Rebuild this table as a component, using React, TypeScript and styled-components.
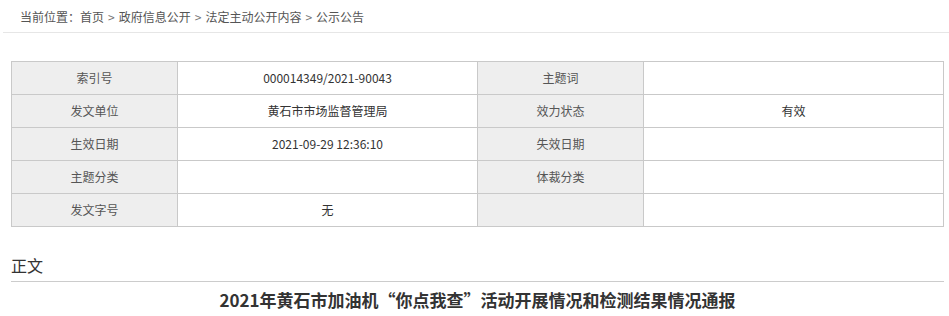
import styled, { createGlobalStyle } from "styled-components";

const GlobalStyle = createGlobalStyle`
  body {
    margin: 0;
    background: #fff;
    font-family: "Noto Sans CJK SC", "Noto Sans", "Liberation Sans", sans-serif;
    color: #333;
  }
`;

const Page = styled.div`
  width: 949px;
  overflow: hidden;
`;

const Crumbs = styled.div`
  margin-left: 3px;
  height: 33px;
  padding-left: 17px;
  border-bottom: 1px solid #e6e6e6;
  display: flex;
  align-items: center;
  font-size: 12px;
  color: #555;
  box-sizing: border-box;
`;

const Sep = styled.span`
  margin: 0 4px;
  color: #777;
`;

const Content = styled.div`
  padding: 28px 5px 0 11px;
`;

const InfoTable = styled.table`
  width: 933px;
  border-collapse: collapse;
  table-layout: fixed;
  font-size: 12px;
`;

const Cell = styled.td<{ $label?: boolean }>`
  height: 32px;
  padding: 0;
  border: 1px solid #c9c9c9;
  text-align: center;
  background: ${(p) => (p.$label ? "#eeeeee" : "#fff")};
  color: ${(p) => (p.$label ? "#555" : "#333")};
  line-height: 1;
`;

const SectionHead = styled.div`
  margin-top: 28px;
  padding-bottom: 6px;
  border-bottom: 1px solid #cccccc;
  font-size: 16px;
  color: #333;
  line-height: 20px;
`;

const Title = styled.h1`
  margin: 6px 0 0;
  text-align: center;
  font-size: 17px;
  font-weight: 700;
  color: #333;
  line-height: 24px;
`;

const rows: [string, string, string, string][] = [
  ["索引号", "000014349/2021-90043", "主题词", ""],
  ["发文单位", "黄石市市场监督管理局", "效力状态", "有效"],
  ["生效日期", "2021-09-29 12:36:10", "失效日期", ""],
  ["主题分类", "", "体裁分类", ""],
  ["发文字号", "无", "", ""],
];

const crumbs = ["首页", "政府信息公开", "法定主动公开内容", "公示公告"];

export default function App() {
  return (
    <Page>
      <GlobalStyle />
      <Crumbs>
        当前位置：
        {crumbs.map((c, i) => (
          <span key={c}>
            {i > 0 && <Sep>&gt;</Sep>}
            {c}
          </span>
        ))}
      </Crumbs>
      <Content>
        <InfoTable>
          <colgroup>
            <col style={{ width: 166 }} />
            <col style={{ width: 300 }} />
            <col style={{ width: 166 }} />
            <col style={{ width: 300 }} />
          </colgroup>
          <tbody>
            {rows.map((r) => (
              <tr key={r[0]}>
                <Cell $label>{r[0]}</Cell>
                <Cell>{r[1]}</Cell>
                <Cell $label>{r[2]}</Cell>
                <Cell>{r[3]}</Cell>
              </tr>
            ))}
          </tbody>
        </InfoTable>
        <SectionHead>正文</SectionHead>
        <Title>2021年黄石市加油机“你点我查”活动开展情况和检测结果情况通报</Title>
      </Content>
    </Page>
  );
}
